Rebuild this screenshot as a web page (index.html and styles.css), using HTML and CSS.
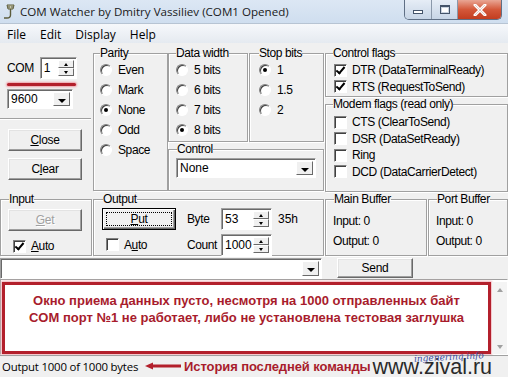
FILE: index.html
```html
<!DOCTYPE html>
<html lang="ru">
<head>
    <meta charset="UTF-8">
    <title>COM Watcher</title>
    <link rel="stylesheet" href="styles.css">
</head>
<body>
<div class="window">
    <!-- caption -->
    <div class="titlebar">
        <svg class="app-icon" width="14" height="16" viewBox="0 0 14 16">
            <path d="M4 1 H11 L10 5 H5 Z" fill="#c9c9a8" stroke="#5c5c3c" stroke-width="1"/>
            <path d="M7.5 5 V11 Q7.5 14 4 14 H1" fill="none" stroke="#5c5c3c" stroke-width="1.4"/>
            <circle cx="6" cy="3" r="0.7" fill="#333"/><circle cx="9" cy="3" r="0.7" fill="#333"/>
        </svg>
        <span class="title">COM Watcher by Dmitry Vassiliev (COM1 Opened)</span>
        <div class="caption-btns">
            <span class="cbtn min"><i></i></span>
            <span class="cbtn max"><i></i></span>
            <span class="cbtn close">
                <svg width="14" height="12" viewBox="0 0 14 12"><path d="M2 1 L12 11 M12 1 L2 11" stroke="#fff" stroke-width="3" stroke-linecap="round"/><path d="M2 1 L12 11 M12 1 L2 11" stroke="#7a2a1a" stroke-width="0.6" opacity="0.4"/></svg>
            </span>
        </div>
    </div>

    <div class="menubar">
        <span>File</span><span>Edit</span><span>Display</span><span>Help</span>
    </div>

    <div class="client">
        <div class="top">
            <!-- port selection -->
            <div class="port-panel">
                <div class="com-row">
                    <span class="lbl">COM</span>
                    <div class="edit spin-edit com-edit">
                        <span>1</span>
                        <div class="spin"><b class="up"></b><b class="down"></b></div>
                    </div>
                </div>
                <div class="red-mark"></div>
                <div class="edit combo baud"><span>9600</span><b class="drop"></b></div>
                <div class="sep"></div>
                <button class="btn wide"><u>C</u>lose</button>
                <button class="btn wide">C<u>l</u>ear</button>
            </div>

            <fieldset class="group parity">
                <legend>Parity</legend>
                <div class="opt"><i class="radio"></i>Even</div>
                <div class="opt"><i class="radio"></i>Mark</div>
                <div class="opt"><i class="radio on"></i>None</div>
                <div class="opt"><i class="radio"></i>Odd</div>
                <div class="opt"><i class="radio"></i>Space</div>
            </fieldset>

            <div class="mid">
                <div class="mid-top">
                    <fieldset class="group width">
                        <legend>Data width</legend>
                        <div class="opt"><i class="radio"></i>5 bits</div>
                        <div class="opt"><i class="radio"></i>6 bits</div>
                        <div class="opt"><i class="radio"></i>7 bits</div>
                        <div class="opt"><i class="radio on"></i>8 bits</div>
                    </fieldset>
                    <fieldset class="group stop">
                        <legend>Stop bits</legend>
                        <div class="opt"><i class="radio on"></i>1</div>
                        <div class="opt"><i class="radio"></i>1.5</div>
                        <div class="opt"><i class="radio"></i>2</div>
                    </fieldset>
                </div>
                <fieldset class="group control">
                    <legend>Control</legend>
                    <div class="edit combo ctl"><span>None</span><b class="drop"></b></div>
                </fieldset>
            </div>

            <div class="flags">
                <fieldset class="group ctl-flags">
                    <legend>Control flags</legend>
                    <div class="chk-row"><i class="check on"></i>DTR (DataTerminalReady)</div>
                    <div class="chk-row"><i class="check on"></i>RTS (RequestToSend)</div>
                </fieldset>
                <fieldset class="group modem">
                    <legend>Modem flags (read only)</legend>
                    <div class="chk-row"><i class="check"></i>CTS (ClearToSend)</div>
                    <div class="chk-row"><i class="check"></i>DSR (DataSetReady)</div>
                    <div class="chk-row"><i class="check"></i>Ring</div>
                    <div class="chk-row"><i class="check"></i>DCD (DataCarrierDetect)</div>
                </fieldset>
            </div>
        </div>

        <div class="io">
            <fieldset class="group input">
                <legend>Input</legend>
                <button class="btn wide disabled"><u>G</u>et</button>
                <div class="chk-row auto"><i class="check on"></i><u>A</u>uto</div>
            </fieldset>
            <fieldset class="group output">
                <legend>Output</legend>
                <div class="out-grid">
                    <button class="btn wide default"><span class="focus"><u>P</u>ut</span></button>
                    <span class="lbl">Byte</span>
                    <div class="edit spin-edit num"><span>53</span><div class="spin"><b class="up"></b><b class="down"></b></div></div>
                    <span class="hex">35h</span>
                    <div class="chk-row auto"><i class="check"></i>A<u>u</u>to</div>
                    <span class="lbl">Count</span>
                    <div class="edit spin-edit num"><span>1000</span><div class="spin"><b class="up"></b><b class="down"></b></div></div>
                </div>
            </fieldset>
            <fieldset class="group buffer main-buf">
                <legend>Main Buffer</legend>
                <div class="stat">Input: 0</div>
                <div class="stat">Output: 0</div>
            </fieldset>
            <fieldset class="group buffer port-buf">
                <legend>Port Buffer</legend>
                <div class="stat">Input: 0</div>
                <div class="stat">Output: 0</div>
            </fieldset>
        </div>

        <div class="send-row">
            <div class="edit combo cmd"><span></span><b class="drop"></b></div>
            <button class="btn send">Send</button>
        </div>

        <div class="log">
            <div class="note">
                <p>Окно приема данных пусто, несмотря на 1000 отправленных байт</p>
                <p>COM порт №1 не работает, либо не установлена тестовая заглушка</p>
            </div>
            <div class="scrollbar">
                <b class="arr up"></b>
                <b class="arr down"></b>
            </div>
        </div>
    </div>

    <div class="statusbar">
        <span class="status-text">Output 1000 of 1000 bytes</span>
        <svg class="arrow" width="36" height="8" viewBox="0 0 36 8">
            <path d="M0 4 L8 0.5 L8 7.5 Z" fill="#b3202c"/>
            <path d="M6 4 H36" stroke="#b3202c" stroke-width="3"/>
        </svg>
        <span class="history">История последней команды</span>
        <span class="site">www.zival.ru</span>
        <span class="stamp">ingenerinq.info</span>
    </div>
</div>
</body>
</html>
```

FILE: styles.css
```css
* {
    box-sizing: border-box;
}

body {
    margin: 0;
    background: #f0f0f0;
    font-family: 'Liberation Sans', Arial, sans-serif;
    font-size: 12px;
    color: #000;
}

.window {
    width: 508px;
    height: 377px;
    overflow: hidden;
    position: relative;
    background: #f0f0f0;
}

/* caption */
.titlebar {
    height: 23px;
    display: flex;
    align-items: center;
    padding-left: 3px;
    background: linear-gradient(#dce7f4, #cfdeef);
    position: relative;
}

.app-icon {
    margin-right: 3px;
}

.title {
    font-family: 'Open Sans', 'Noto Sans', sans-serif;
    font-size: 11.6px;
    color: #1a1a1a;
}

.caption-btns {
    position: absolute;
    top: 0;
    right: 6px;
    display: flex;
    height: 20px;
    border: 1px solid #5f6f85;
    border-top: none;
    border-radius: 0 0 5px 5px;
    overflow: hidden;
}

.cbtn {
    display: flex;
    align-items: center;
    justify-content: center;
    height: 19px;
    background: linear-gradient(#e6edf6, #c7d5e6);
    border-right: 1px solid #8a98aa;
}

.cbtn.min { width: 27px; }
.cbtn.max { width: 26px; }

.cbtn.min i {
    width: 10px;
    height: 4px;
    border: 1px solid #44546a;
    background: #fff;
    margin-top: 5px;
}

.cbtn.max i {
    width: 10px;
    height: 9px;
    border: 1px solid #44546a;
    border-top-width: 2px;
    background: #fff;
    box-shadow: inset 0 0 0 1px #c9d3df;
}

.cbtn.close {
    width: 43px;
    border-right: none;
    background: linear-gradient(#e9a694, #d4583a 50%, #c23d20);
}

/* menu */
.menubar {
    height: 20px;
    display: flex;
    align-items: center;
    background: linear-gradient(#f6f8fb, #e5eaf0);
    border-top: 1px solid #b7c4d3;
    font-family: 'Open Sans', 'Noto Sans', sans-serif;
    font-size: 12px;
    padding: 2px 0 0 7px;
    gap: 14px;
}

.client {
    padding-top: 3px;
}

/* generic group box */
.group {
    margin: 0;
    padding: 0 0 0 6px;
    min-width: 0;
    border: 1px solid #a0a0a0;
    box-shadow: 1px 1px 0 #fff, inset 1px 1px 0 #fff;
}

.group legend {
    padding: 0;
    margin-left: 1px;
    line-height: 14px;
    letter-spacing: -0.4px;
}

.opt, .chk-row {
    display: flex;
    align-items: center;
    letter-spacing: -0.4px;
}

.opt {
    height: 20px;
}

.chk-row {
    height: 16.5px;
}

.radio {
    width: 12px;
    height: 12px;
    border-radius: 50%;
    background: #fff;
    border: 1px solid;
    border-color: #808080 #fff #fff #808080;
    box-shadow: inset 1px 1px 0 #404040;
    margin: 0 6px 0 1px;
    position: relative;
}

.radio.on::after {
    content: "";
    position: absolute;
    left: 3px;
    top: 3px;
    width: 4px;
    height: 4px;
    border-radius: 50%;
    background: #000;
}

.check {
    width: 13px;
    height: 13px;
    background: #fff;
    border: 1px solid;
    border-color: #808080 #fff #fff #808080;
    box-shadow: inset 1px 1px 0 #404040;
    margin: 0 5px 0 2px;
    position: relative;
}

.check.on::after {
    content: "";
    position: absolute;
    left: 3px;
    top: 0px;
    width: 3px;
    height: 7px;
    border: solid #000;
    border-width: 0 2px 2px 0;
    transform: rotate(40deg);
}

/* sunken edit / combo */
.edit {
    background: #fff;
    border: 1px solid;
    border-color: #a0a0a0 #fff #fff #a0a0a0;
    box-shadow: inset 1px 1px 0 #696969;
    display: flex;
    align-items: center;
    padding-left: 3px;
    position: relative;
}

.edit span {
    flex: 1;
}

.spin {
    display: flex;
    flex-direction: column;
    width: 16px;
    align-self: stretch;
    margin: 2px 2px 2px 0;
}

.spin b, .drop, .btn, .scrollbar .arr {
    background: #f0f0f0;
    border: 1px solid;
    border-color: #fff #696969 #696969 #fff;
}

.spin b {
    flex: 1;
    position: relative;
}

.spin b::after {
    content: "";
    position: absolute;
    left: 5px;
    top: 3px;
    border: 2.5px solid transparent;
}

.spin b.up::after {
    top: 0;
    border-bottom: 3px solid #000;
}

.spin b.down::after {
    top: 2px;
    border-top: 3px solid #000;
}

.drop {
    width: 17px;
    align-self: stretch;
    margin: 2px;
    position: relative;
}

.drop::after {
    content: "";
    position: absolute;
    left: 4px;
    top: 6px;
    border: 4px solid transparent;
    border-top: 4px solid #000;
}

.btn {
    font-family: inherit;
    font-size: 12px;
    letter-spacing: -0.3px;
    height: 22px;
    padding: 0;
    box-shadow: inset -1px -1px 0 #a0a0a0, inset 1px 1px 0 #e3e3e3;
    color: #000;
}

.btn.wide {
    width: 74px;
}

.btn.disabled {
    color: #a0a0a0;
    text-shadow: 1px 1px 0 #fff;
}

/* top section */
.top {
    display: flex;
    height: 146px;
}

.port-panel {
    width: 93px;
    display: flex;
    flex-direction: column;
    padding-top: 11px;
}

.com-row {
    display: flex;
    align-items: center;
    padding-left: 7px;
    gap: 6px;
}

.lbl {
    letter-spacing: -0.4px;
}

.com-edit {
    width: 37px;
    height: 22px;
}

.red-mark {
    width: 69px;
    height: 3px;
    margin: 4px 0 3px 7px;
    background: #b3202c;
    box-shadow: 0 0 2px 1px #f0a0a8;
    border-radius: 2px;
}

.baud {
    width: 66px;
    height: 20px;
    margin-left: 7px;
}

.sep {
    height: 2px;
    margin: 9px 2px 9px 0;
    border-top: 1px solid #a0a0a0;
    border-bottom: 1px solid #fff;
}

.port-panel .btn {
    margin: 0 0 7px 8px;
}

.parity {
    width: 75px;
    height: 145px;
    padding-left: 5px;
}

.mid {
    width: 156px;
    display: flex;
    flex-direction: column;
}

.mid-top {
    display: flex;
    height: 96px;
}

.width {
    width: 80px;
    padding-left: 6px;
}

.stop {
    width: 75px;
    margin-left: 1px;
    padding-left: 8px;
}

.control {
    height: 49px;
    padding: 2px 0 0 7px;
}

.ctl {
    width: 140px;
    height: 20px;
}

.flags {
    flex: 1;
    display: flex;
    flex-direction: column;
    margin-left: 1px;
}

.ctl-flags {
    height: 51px;
    padding-top: 2px;
}

.modem {
    flex: 1;
    padding-top: 3px;
}

/* io section */
.io {
    display: flex;
    height: 64px;
}

.input {
    width: 92px;
    padding: 3px 0 0 7px;
}

.auto {
    margin-top: 7px;
    height: 16px;
    padding-left: 3px;
}

.output {
    width: 231px;
    margin-left: 1px;
    padding: 1px 0 0 8px;
}

.out-grid {
    display: grid;
    grid-template-columns: 74px 45px 51px auto;
    grid-template-rows: 23px 23px;
    row-gap: 3px;
    align-items: center;
}

.out-grid .lbl {
    padding-left: 11px;
}

.out-grid .auto {
    margin-top: 0;
    padding-left: 2px;
}

.num {
    height: 22px;
}

.hex {
    padding-left: 6px;
}

.btn.default {
    border: 1px solid #000;
    box-shadow: inset 1px 1px 0 #fff, inset -1px -1px 0 #696969, inset -2px -2px 0 #a0a0a0;
    padding: 3px;
}

.btn .focus {
    display: block;
    height: 100%;
    border: 1px dotted #000;
    line-height: 12px;
}

.buffer {
    padding: 5px 0 0 7px;
    margin-left: 1px;
}

.main-buf {
    width: 102px;
}

.port-buf {
    flex: 1;
}

.stat {
    height: 20px;
    display: flex;
    align-items: center;
    letter-spacing: -0.4px;
}

/* command row */
.send-row {
    display: flex;
    align-items: center;
    height: 23px;
    padding-top: 1px;
}

.cmd {
    width: 322px;
    height: 21px;
}

.send {
    width: 76px;
    height: 20px;
    margin-left: 15px;
}

/* receive window */
.log {
    height: 76px;
    background: #fff;
    border: 1px solid;
    border-color: #a0a0a0 #fff #fff #a0a0a0;
    display: flex;
    padding: 2px 0 0 1px;
}

.note {
    width: 489px;
    height: 72px;
    border: 3px solid #b3202c;
    box-shadow: 0 0 2px 1px #f0b0b8;
    color: #a81c2c;
    font-weight: bold;
    font-size: 13px;
    text-align: center;
    padding-top: 7px;
}

.note p {
    margin: 0;
    line-height: 17px;
}

.scrollbar {
    flex: 1;
    display: flex;
    flex-direction: column;
    justify-content: space-between;
    background: #f4f4f4;
    margin-left: 1px;
}

.scrollbar .arr {
    height: 16px;
    border-color: #f4f4f4;
    background: #f4f4f4;
    position: relative;
}

.scrollbar .arr::after {
    content: "";
    position: absolute;
    left: 4px;
    border: 3.5px solid transparent;
}

.scrollbar .up::after {
    top: 2px;
    border-bottom: 4px solid #a0a0a0;
}

.scrollbar .down::after {
    top: 6px;
    border-top: 4px solid #a0a0a0;
}

/* status */
.statusbar {
    height: 21px;
    border-top: 1px solid #a0a0a0;
    display: flex;
    align-items: center;
    padding-left: 2px;
    position: relative;
    white-space: nowrap;
}

.status-text {
    font-family: 'Open Sans', 'Noto Sans', sans-serif;
    font-size: 11.4px;
    letter-spacing: -0.2px;
}

.arrow {
    margin: 0 3px 0 7px;
}

.history {
    color: #a81c2c;
    font-weight: bold;
    font-size: 13px;
    letter-spacing: -0.1px;
}

.site {
    font-family: 'Liberation Sans', Arial, sans-serif;
    font-size: 21.5px;
    color: #2a2a2a;
    margin-left: 2px;
    line-height: 20px;
    margin-top: 1px;
}

.stamp {
    position: absolute;
    left: 414px;
    top: -4px;
    font-family: 'DejaVu Serif', serif;
    font-style: italic;
    font-size: 9px;
    color: #3a4ea0;
    transform: rotate(-3deg);
}
```
